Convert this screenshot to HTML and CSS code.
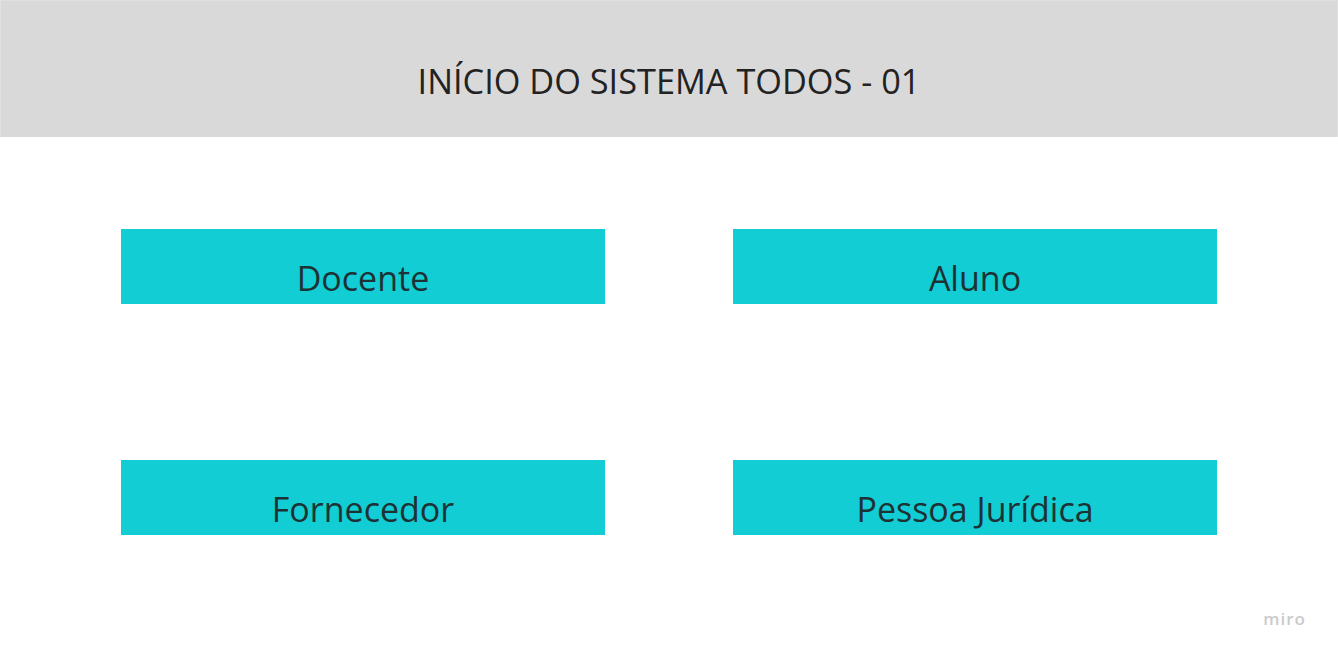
FILE: index.html
```html
<!DOCTYPE html>
<html lang="pt">
  <head>
    <meta charset="UTF-8" />
    <meta name="viewport" content="width=device-width, initial-scale=1.0" />
    <title>Início do Sistema</title>
    <link rel="stylesheet" href="styles.css">
  </head>
  <body>
    <div class="header">
      <div class="header-title">INÍCIO DO SISTEMA TODOS - 01</div>
    </div>
    <div class="menu">
      <div class="btn">Docente</div>
      <div class="btn">Aluno</div>
      <div class="btn">Fornecedor</div>
      <div class="btn">Pessoa Jurídica</div>
    </div>
    <div class="footer">
      <span class="brand">miro</span>
    </div>
  </body>
</html>
```

FILE: styles.css
```css
* {
  margin: 0;
  padding: 0;
  box-sizing: border-box;
}
body {
  font-family: "Open Sans", "Liberation Sans", sans-serif;
  background-color: #fff;
  color: #1f2b2d;
  width: 1338px;
  height: 656px;
  overflow: hidden;
  display: flex;
  flex-direction: column;
}
.header {
  height: 137px;
  background-color: #d9d9d9;
  border: 1px solid #e0e0e0;
  border-bottom: none;
  display: flex;
  justify-content: center;
  align-items: flex-start;
}
.header-title {
  margin-top: 60px;
  font-size: 34.3px;
  line-height: 40px;
  color: #222;
}
.menu {
  display: grid;
  grid-template-columns: 484px 484px;
  grid-auto-rows: 75px;
  column-gap: 128px;
  row-gap: 156px;
  padding: 92px 121px 0;
}
.btn {
  background-color: #13cdd4;
  font-size: 34px;
  line-height: 40px;
  text-align: center;
  padding-top: 29px;
  color: #1d3234;
}
.footer {
  flex: 1;
  display: flex;
  justify-content: flex-end;
  align-items: flex-end;
  padding: 0 32px 26px 0;
}
.brand {
  font-size: 17px;
  font-weight: 600;
  letter-spacing: 1px;
  color: #cbcbcb;
}
```
